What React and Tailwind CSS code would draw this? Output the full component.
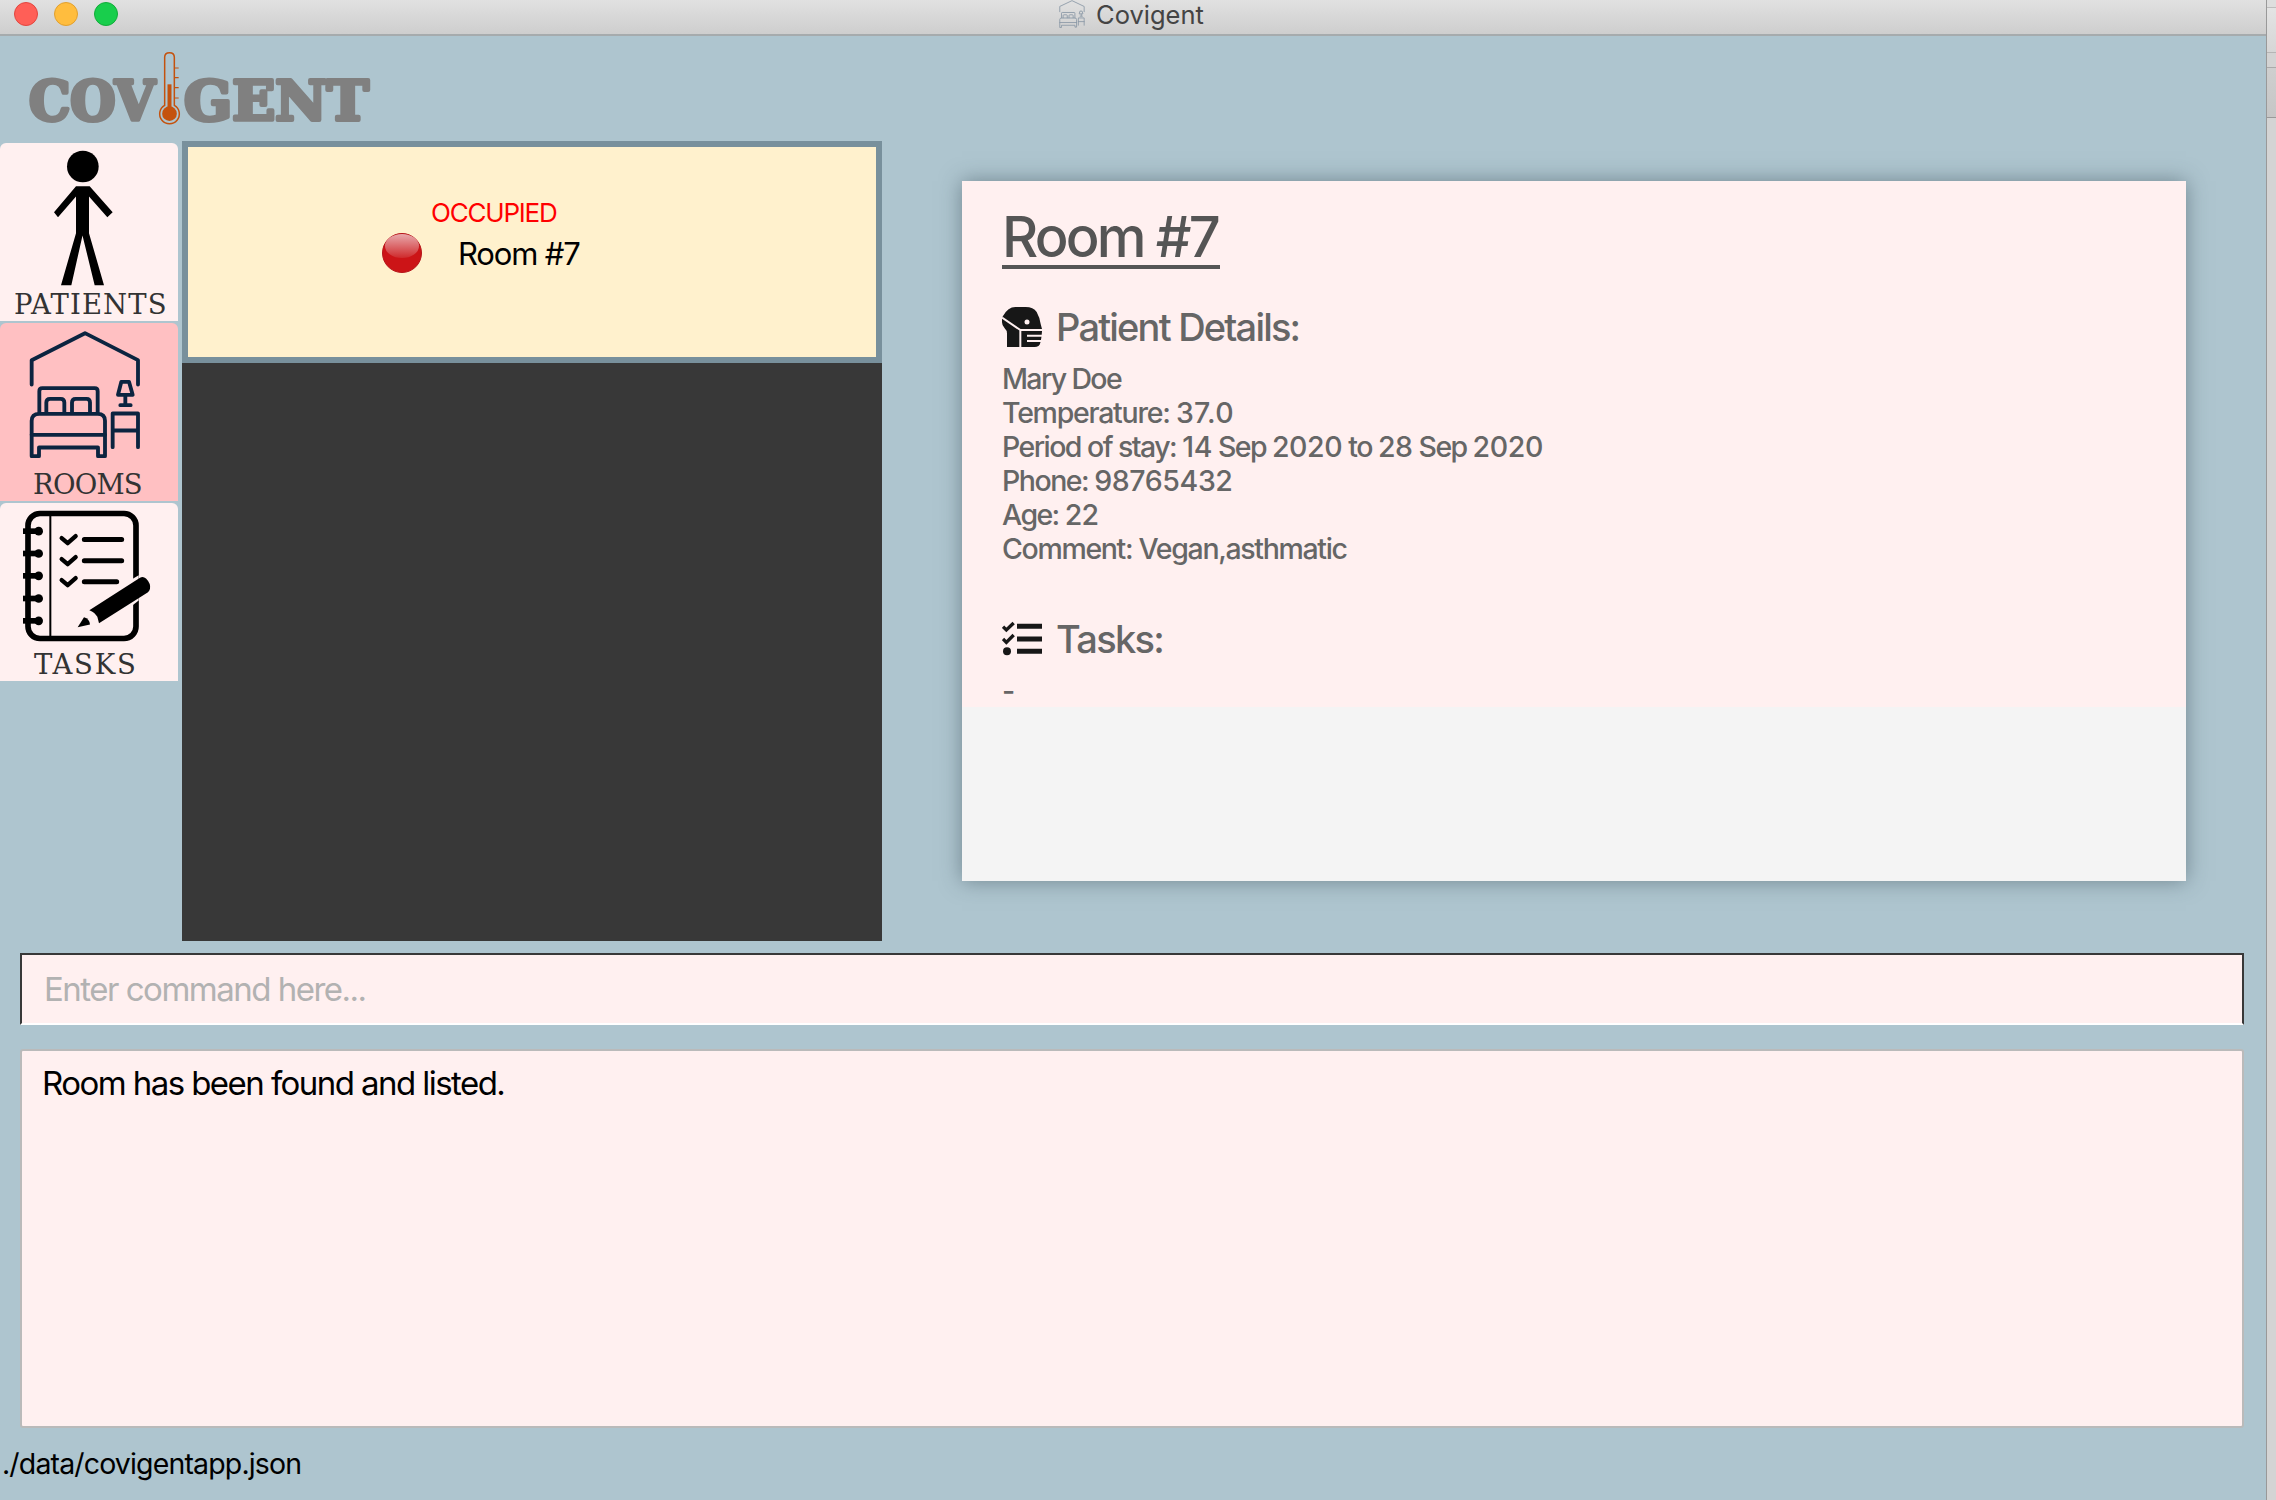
import React from "react";

const patientDetails = [
  { label: "Mary Doe", labelClass: "tracking-[-1.65px]", parts: [] },
  { label: "Temperature: ", labelClass: "tracking-[-1.25px]", parts: [{ text: "37.0", className: "tracking-[0.3px]" }] },
  {
    label: "Period of stay: ",
    labelClass: "tracking-[-1.55px]",
    parts: [
      { text: "14", className: "tracking-[-0.4px]" },
      { text: " Sep ", className: "tracking-[-1.6px]" },
      { text: "2020", className: "tracking-[-0.4px]" },
      { text: " to ", className: "tracking-[-1.55px]" },
      { text: "28", className: "tracking-[-0.4px]" },
      { text: " Sep ", className: "tracking-[-1.6px]" },
      { text: "2020", className: "tracking-[-0.4px]" },
    ],
  },
  { label: "Phone: ", labelClass: "tracking-[-1.5px]", parts: [{ text: "98765432", className: "tracking-[-0.4px]" }] },
  { label: "Age: ", labelClass: "tracking-[-1.6px]", parts: [{ text: "22", className: "tracking-[-0.6px]" }] },
  { label: "Comment: Vegan,asthmatic", labelClass: "tracking-[-1.34px]", parts: [] },
];

function PatientIcon() {
  return (
    <svg viewBox="0 39 534 440" className="block h-[147px] w-[178px]" fill="#000">
      <circle cx="248.500" cy="109" r="47.500" />
      <path d="M228 168H269L338 246L322 261L267 199V309L312 465H284L247.500 316L214 465H183L228 309V199L174 261L162 246Z" />
    </svg>
  );
}

function BedroomDrawing() {
  return (
    <g fill="none" stroke="currentColor" strokeWidth="11.500" strokeLinecap="round" strokeLinejoin="round">
      <path d="M95 208V135L255 54L414 135V208" />
      <path d="M118 293V228Q118 219 127 219H284Q293 219 293 228V293" />
      <path d="M139 293V262Q139 251 150 251H182Q193 251 193 262V293" />
      <path d="M216 293V262Q216 251 227 251H260Q270 251 270 262V293" />
      <path d="M95 423V317Q95 296 118 296H293Q315 296 315 317V423H294V397H117V423Z" />
      <path d="M95 359H315" />
      <path d="M338 396V295H414V396M338 346H414" />
      <path d="M364 200H387L398 239H354ZM376 240V268M361 270H392" />
    </g>
  );
}

function RoomIcon() {
  return (
    <svg viewBox="0 24 534 440" className="block h-[147px] w-[178px] text-[#0b2440]">
      <BedroomDrawing />
    </svg>
  );
}

function TaskIcon() {
  return (
    <svg viewBox="0 24 534 440" className="block h-[147px] w-[178px]" fill="none" stroke="#000" strokeLinecap="round" strokeLinejoin="round">
      <rect x="84" y="55" width="324" height="375" rx="36" strokeWidth="17" />
      <path d="M151 60V426" strokeWidth="6" />
      {[108, 175, 242, 310, 377].map((y) => (
        <g key={y}>
          <path d={`M69 ${y}H112`} strokeWidth="17" strokeLinecap="butt" />
          <circle cx="116" cy={y} r="13" fill="#000" stroke="none" />
        </g>
      ))}
      <path d="M185 129L203 144L227 123M185 192L203 207L227 186M185 255L203 270L227 249" strokeWidth="13" />
      <path d="M253 133H365M253 197H365M253 260H350" strokeWidth="15" />
      <path d="M396 252L416 240V316L396 332Z" fill="#fff0f0" stroke="none" />
      <path d="M268 345L420 248Q429 242 438 250Q453 265 450 281Q449 287 444 291L297 384Q294 373 292 365Q285 352 268 345Z" fill="#000" stroke="none" />
      <path d="M252 366L233 396L270 388Q269 371 252 366Z" fill="#000" stroke="none" />
    </svg>
  );
}

function Logo() {
  return (
    <svg viewBox="0 108 1200 315" className="block h-[105px] w-[400px]" aria-label="Covigent">
      <g
        fill="#808080"
        stroke="#808080"
        strokeWidth="12"
        strokeLinejoin="round"
        fontFamily="'DejaVu Serif', serif"
        fontWeight="700"
        fontSize="162"
      >
        <text x="87" y="361" textLength="378" lengthAdjust="spacingAndGlyphs">COV</text>
        <text x="552" y="361" textLength="554" lengthAdjust="spacingAndGlyphs">GENT</text>
      </g>
      <g fill="none" stroke="#c4520e" strokeWidth="4.500">
        <path d="M494 316V172Q494 158 508.500 158Q523 158 523 172V316A29.500 29.500 0 1 1 494 316Z" />
        <path d="M523 204H536M523 233H536M523 263H536M523 294H536" strokeWidth="3.500" />
        <path d="M508.500 253V335" strokeWidth="12" />
        <circle cx="508.500" cy="341" r="22" fill="#c4520e" stroke="none" />
      </g>
    </svg>
  );
}

function MaskedHeadIcon() {
  return (
    <svg viewBox="66 51 120 120" className="block size-[40px]">
      <path
        fill="#171717"
        d="M69 78Q84 51 106 51H137Q160 51 170 66Q180 84 182 102L186 117V124Q184 150 181 158Q178 171 164 171H81V131Q81 121 74 115Q66 107 66 97V84Z"
      />
      <circle cx="141" cy="96" r="7.500" fill="#fff0f0" />
      <path d="M66 83L121 120V171M121 120H186" fill="none" stroke="#fff0f0" strokeWidth="6" />
      <path d="M141 137H186M141 153H186" fill="none" stroke="#fff0f0" strokeWidth="6" />
    </svg>
  );
}

function ChecklistIcon() {
  return (
    <svg viewBox="66 57 120 120" className="block size-[40px]" fill="none" stroke="#171717">
      <path d="M69 80L79 90L101 69M69 117L79 127L101 105" strokeWidth="10" />
      <circle cx="81" cy="154" r="12" fill="#171717" stroke="none" />
      <path d="M111 79H186M111 117H186M111 154H186" strokeWidth="15" />
    </svg>
  );
}

function SideButton({ icon, label, active, labelClass }) {
  return (
    <button className={`flex h-[178px] w-[178px] flex-col rounded-t-[6px] ${active ? "bg-[#ffc0c2]" : "bg-[#fff0f0]"}`}>
      {icon}
      <span
        className={`block h-[28px] w-[178px] whitespace-nowrap text-left font-['DejaVu_Serif',serif] text-[27.5px] leading-[28px] text-[#333] ${labelClass}`}
      >
        {label}
      </span>
    </button>
  );
}

function TitleBar() {
  return (
    <header className="flex h-[36px] w-full border-b-2 border-[#a6abad] bg-linear-to-b from-[#e1e1e1] to-[#cecece]">
      <div className="flex w-[1059px] gap-[16px] pt-[2px] pl-[14px]">
        <span className="size-[24px] rounded-full border border-[#e2463f] bg-[#ff5f57]" />
        <span className="size-[24px] rounded-full border border-[#e1a02f] bg-[#ffbd3e]" />
        <span className="size-[24px] rounded-full border border-[#12ac3a] bg-[#18ce4c]" />
      </div>
      <svg viewBox="85 45 340 390" preserveAspectRatio="none" className="block h-[28px] w-[26px] text-[#8a98a6]">
        <BedroomDrawing />
      </svg>
      <h1 className="ml-[11px] h-[29px] whitespace-nowrap text-[25.5px] leading-[29px] tracking-normal text-[#444]">Covigent</h1>
    </header>
  );
}

function RoomList() {
  return (
    <section className="ml-[4px] h-[800px] w-[700px] bg-[#383838]">
      <div className="flex h-[222px] w-[700px] flex-col border-[6px] border-[#78909c] bg-[#fff1cd] pt-[50px]">
        <p className="h-[32px] pl-[243px] text-[26px] leading-[32px] tracking-[-1.2px] whitespace-nowrap text-[#ff0000]">OCCUPIED</p>
        <div className="mt-[3px] flex h-[42px] items-center pl-[194px]">
          <svg viewBox="0 0 40 40" className="block size-[40px]">
            <defs>
              <linearGradient id="gloss" x1="0" y1="0" x2="0" y2="1">
                <stop offset="0" stopColor="#e8a9ac" />
                <stop offset="1" stopColor="#cf2a2c" />
              </linearGradient>
            </defs>
            <circle cx="20" cy="20" r="19.500" fill="#cc1417" stroke="#b5161a" />
            <ellipse cx="20" cy="13" rx="17" ry="12" fill="url(#gloss)" />
          </svg>
          <p className="mt-[2px] ml-[36px] whitespace-nowrap text-[31px] leading-[42px] tracking-[-1.15px] text-black">Room #7</p>
        </div>
      </div>
    </section>
  );
}

function RoomDetails() {
  return (
    <section className="mt-[40px] ml-[80px] h-[700px] w-[1224px] bg-[#f4f4f4] shadow-[0_0_20px_0px_rgba(50,70,80,0.5)]">
      <div className="h-[526px] bg-[#fff0f0] pt-[27px] pl-[40px] font-[450] text-[#666]">
        <h2 className="h-[61px] w-[218px] border-b-[4px] border-[#555] text-[56px] leading-[59px] font-[450] tracking-[-2.8px] whitespace-nowrap text-[#555]">
          Room #7
        </h2>
        <div className="mt-[38px] flex h-[40px]">
          <MaskedHeadIcon />
          <h3 className="ml-[14px] text-[38px] leading-[40px] font-[450] tracking-[-1.8px] whitespace-nowrap">Patient Details:</h3>
        </div>
        <ul className="mt-[15px] text-[28.5px] leading-[34px] whitespace-nowrap">
          {patientDetails.map((line) => (
            <li key={line.label} className="h-[34px] whitespace-pre">
              <span className={line.labelClass}>{line.label}</span>
              {line.parts.map((part, i) => (
                <span key={i} className={part.className}>{part.text}</span>
              ))}
            </li>
          ))}
        </ul>
        <div className="mt-[53px] flex h-[40px]">
          <ChecklistIcon />
          <h3 className="ml-[14px] text-[38px] leading-[40px] font-[450] tracking-[-1.7px] whitespace-nowrap">Tasks:</h3>
        </div>
        <p className="mt-[15px] text-[28.5px] leading-[34px]">-</p>
      </div>
    </section>
  );
}

function BackgroundEdge() {
  return (
    <div className="flex h-[1500px] w-[10px] flex-col border-l border-[#999] bg-[#d4d4d4]">
      <div className="h-[8px] border-b border-[#bdbdbd] bg-[#dedede]" />
      <div className="h-[45px] border-b border-[#b5b5b5] bg-linear-to-b from-[#e4e4e4] to-[#d6d6d6]" />
      <div className="h-[15px] border-b border-[#aaa] bg-[#d3d3d3]" />
      <div className="h-[50px] border-b border-[#999] bg-linear-to-b from-[#cfcfcf] to-[#c6c6c6]" />
    </div>
  );
}

export default function App() {
  return (
    <div className="flex h-[1500px] w-[2276px] overflow-hidden bg-[#aec5cf] font-['Inter',sans-serif]">
      <main className="flex h-[1500px] w-[2266px] flex-col">
        <TitleBar />
        <Logo />
        <div className="flex h-[812px]">
          <nav className="flex w-[178px] flex-col gap-[2px] pt-[2px]">
            <SideButton icon={<PatientIcon />} label="PATIENTS" labelClass="pl-[14px] tracking-[1.1px]" />
            <SideButton icon={<RoomIcon />} label="ROOMS" labelClass="pl-[33px] tracking-[-0.8px]" active />
            <SideButton icon={<TaskIcon />} label="TASKS" labelClass="pl-[34px] tracking-[1.7px]" />
          </nav>
          <RoomList />
          <RoomDetails />
        </div>
        <div className="ml-[20px] h-[72px] w-[2224px] border-2 border-[#383838] border-b-white bg-[#fff0f0] pl-[22px]">
          <input
            className="block h-[68px] w-full bg-transparent text-[33px] leading-[68px] tracking-[-1.5px] outline-none placeholder:text-[#b2b2b2] placeholder:opacity-100"
            placeholder="Enter command here..."
          />
        </div>
        <div className="mt-[24px] ml-[20px] h-[379px] w-[2224px] rounded-[3px] border-2 border-[#bababa] bg-[#fff0f0] pt-[12px] pl-[20px]">
          <p className="text-[33px] leading-[40px] tracking-[-1.56px] whitespace-nowrap text-black">Room has been found and listed.</p>
        </div>
        <footer className="mt-[17px] pl-[2px] text-[28.5px] leading-[38px] tracking-[-0.85px] whitespace-nowrap text-black">./data/covigentapp.json</footer>
      </main>
      <BackgroundEdge />
    </div>
  );
}
